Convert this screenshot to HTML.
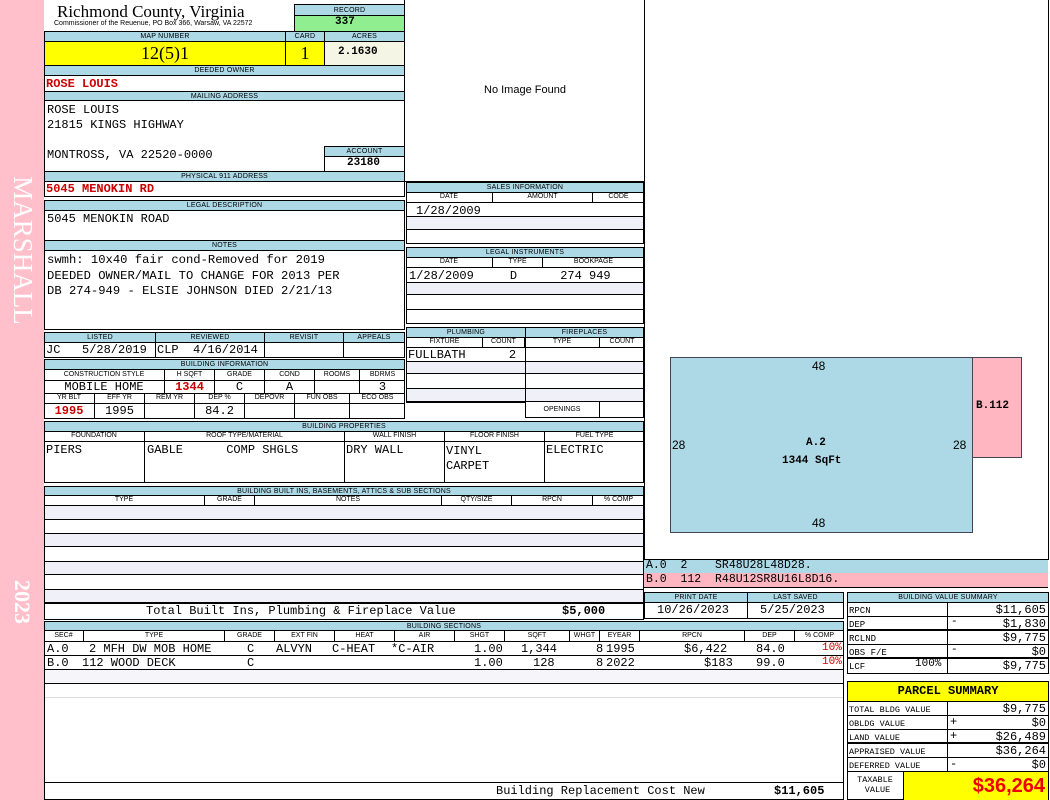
<!DOCTYPE html>
<html><head><meta charset="utf-8">
<style>
*{margin:0;padding:0;box-sizing:border-box}
body{width:1050px;height:800px;position:relative;background:#fff;overflow:hidden;font-family:"Liberation Mono",monospace}
.a{position:absolute}
.h{position:absolute;background:#add8e6;border:1px solid #000;font:7px/1 "Liberation Sans",sans-serif;text-align:center;display:flex;align-items:center;justify-content:center;color:#000;letter-spacing:.2px}
.c{position:absolute;border:1px solid #000;background:#fff}
.m{position:absolute;font:12px/1 "Liberation Mono",monospace;color:#000;white-space:pre}
.r{color:#c00;font-weight:bold}
.s{background:#f0f0f8}
</style></head><body>
<div class="a" style="left:0;top:0;width:44px;height:800px;background:#ffc0cb"></div>
<div class="a" style="left:8px;top:170px;width:28px;height:160px;display:flex;align-items:center;justify-content:center"><div style="transform:rotate(90deg);font:27px 'Liberation Serif',serif;color:#fff;white-space:nowrap">MARSHALL</div></div>
<div class="a" style="left:8px;top:576px;width:28px;height:52px;display:flex;align-items:center;justify-content:center"><div style="transform:rotate(90deg);font:bold 22px 'Liberation Serif',serif;color:#fff;white-space:nowrap">2023</div></div>

<div class="a" style="left:57px;top:2px;font:17px 'Liberation Serif',serif;white-space:nowrap">Richmond County, Virginia</div>
<div class="a" style="left:54px;top:20px;font:7px 'Liberation Sans',sans-serif;white-space:nowrap">Commissioner of the Reuenue, PO Box 366, Warsaw, VA 22572</div>
<div class="h" style="left:294px;top:4px;width:111px;height:12px">RECORD</div>
<div class="c" style="left:294px;top:15px;width:111px;height:17px;background:#90ee90"></div>
<div class="m" style="left:335px;top:17px;font-weight:bold;font-size:11px">337</div>

<div class="h" style="left:44px;top:31px;width:242px;height:11px">MAP NUMBER</div>
<div class="h" style="left:285px;top:31px;width:40px;height:11px">CARD</div>
<div class="h" style="left:324px;top:31px;width:81px;height:11px">ACRES</div>
<div class="c" style="left:44px;top:41px;width:242px;height:25px;background:#ff0"></div>
<div class="c" style="left:285px;top:41px;width:40px;height:25px;background:#ff0"></div>
<div class="c" style="left:324px;top:41px;width:81px;height:25px;background:#f5f5e6"></div>
<div class="a" style="left:44px;top:43px;width:242px;text-align:center;font:18px 'Liberation Serif',serif">12(5)1</div>
<div class="a" style="left:285px;top:43px;width:40px;text-align:center;font:18px 'Liberation Serif',serif">1</div>
<div class="m" style="left:338px;top:47px;font-weight:bold;font-size:11px">2.1630</div>

<div class="h" style="left:44px;top:65px;width:361px;height:11px">DEEDED OWNER</div>
<div class="c" style="left:44px;top:75px;width:361px;height:17px"></div>
<div class="m r" style="left:46px;top:78px">ROSE LOUIS</div>
<div class="h" style="left:44px;top:91px;width:361px;height:10px">MAILING ADDRESS</div>
<div class="c" style="left:44px;top:100px;width:361px;height:72px"></div>
<div class="m" style="left:47px;top:103px;line-height:15px">ROSE LOUIS
21815 KINGS HIGHWAY

MONTROSS, VA 22520-0000</div>
<div class="h" style="left:324px;top:146px;width:81px;height:11px">ACCOUNT</div>
<div class="c" style="left:324px;top:156px;width:81px;height:16px"></div>
<div class="m" style="left:347px;top:158px;font-weight:bold;font-size:11px">23180</div>
<div class="h" style="left:44px;top:171px;width:361px;height:11px">PHYSICAL 911 ADDRESS</div>
<div class="c" style="left:44px;top:181px;width:361px;height:16px"></div>
<div class="m r" style="left:46px;top:183px">5045 MENOKIN RD</div>

<div class="h" style="left:44px;top:200px;width:361px;height:11px">LEGAL DESCRIPTION</div>
<div class="c" style="left:44px;top:210px;width:361px;height:31px"></div>
<div class="m" style="left:47px;top:213px">5045 MENOKIN ROAD</div>
<div class="h" style="left:44px;top:240px;width:361px;height:11px">NOTES</div>
<div class="c" style="left:44px;top:250px;width:361px;height:80px"></div>
<div class="m" style="left:47px;top:253px;line-height:15.5px;font-size:12.2px">swmh: 10x40 fair cond-Removed for 2019
DEEDED OWNER/MAIL TO CHANGE FOR 2013 PER
DB 274-949 - ELSIE JOHNSON DIED 2/21/13</div>

<div class="h" style="left:44px;top:332px;width:112px;height:11px">LISTED</div>
<div class="h" style="left:155px;top:332px;width:110px;height:11px">REVIEWED</div>
<div class="h" style="left:264px;top:332px;width:80px;height:11px">REVISIT</div>
<div class="h" style="left:343px;top:332px;width:62px;height:11px">APPEALS</div>
<div class="c" style="left:44px;top:342px;width:112px;height:16px"></div>
<div class="c" style="left:155px;top:342px;width:110px;height:16px"></div>
<div class="c" style="left:264px;top:342px;width:80px;height:16px"></div>
<div class="c" style="left:343px;top:342px;width:62px;height:16px"></div>
<div class="m" style="left:46px;top:344px">JC   5/28/2019</div>
<div class="m" style="left:157px;top:344px">CLP  4/16/2014</div>

<div class="h" style="left:44px;top:359px;width:361px;height:11px">BUILDING INFORMATION</div>
<div class="c" style="left:44px;top:369px;width:361px;height:50px"></div>
<div class="a" style="left:44px;top:369px;width:361px;height:12px;font:7px 'Liberation Sans',sans-serif;display:flex">
<div style="width:121px;text-align:center;border-right:1px solid #000;line-height:11px">CONSTRUCTION STYLE</div>
<div style="width:50px;text-align:center;border-right:1px solid #000;line-height:11px">H SQFT</div>
<div style="width:50px;text-align:center;border-right:1px solid #000;line-height:11px">GRADE</div>
<div style="width:50px;text-align:center;border-right:1px solid #000;line-height:11px">COND</div>
<div style="width:45px;text-align:center;border-right:1px solid #000;line-height:11px">ROOMS</div>
<div style="flex:1;text-align:center;line-height:11px">BDRMS</div></div>
<div class="a" style="left:44px;top:380px;width:361px;height:14px;border-top:1px solid #000;border-bottom:1px solid #000;display:flex;font:12px/13px 'Liberation Mono',monospace">
<div style="width:121px;text-align:center;border-right:1px solid #000">MOBILE HOME</div>
<div style="width:50px;text-align:center;border-right:1px solid #000;color:#c00;font-weight:bold">1344</div>
<div style="width:50px;text-align:center;border-right:1px solid #000">C</div>
<div style="width:50px;text-align:center;border-right:1px solid #000">A</div>
<div style="width:45px;border-right:1px solid #000"></div>
<div style="flex:1;text-align:center">3</div></div>
<div class="a" style="left:44px;top:393px;width:361px;height:11px;font:7px 'Liberation Sans',sans-serif;display:flex;border-bottom:1px solid #000">
<div style="width:51px;text-align:center;border-right:1px solid #000;line-height:10px">YR BLT</div>
<div style="width:50px;text-align:center;border-right:1px solid #000;line-height:10px">EFF YR</div>
<div style="width:50px;text-align:center;border-right:1px solid #000;line-height:10px">REM YR</div>
<div style="width:50px;text-align:center;border-right:1px solid #000;line-height:10px">DEP %</div>
<div style="width:50px;text-align:center;border-right:1px solid #000;line-height:10px">DEPOVR</div>
<div style="width:55px;text-align:center;border-right:1px solid #000;line-height:10px">FUN OBS</div>
<div style="flex:1;text-align:center;line-height:10px">ECO OBS</div></div>
<div class="a" style="left:44px;top:404px;width:361px;height:14px;display:flex;font:12px/14px 'Liberation Mono',monospace">
<div style="width:51px;text-align:center;border-right:1px solid #000;color:#c00;font-weight:bold">1995</div>
<div style="width:50px;text-align:center;border-right:1px solid #000">1995</div>
<div style="width:50px;border-right:1px solid #000"></div>
<div style="width:50px;text-align:center;border-right:1px solid #000">84.2</div>
<div style="width:50px;border-right:1px solid #000"></div>
<div style="width:55px;border-right:1px solid #000"></div>
<div style="flex:1"></div></div>

<div class="c" style="left:404px;top:-1px;width:241px;height:183px"></div>
<div class="a" style="left:484px;top:84px;font:11px 'Liberation Sans',sans-serif">No Image Found</div>
<div class="c" style="left:644px;top:-1px;width:405px;height:561px"></div>

<div class="h" style="left:406px;top:182px;width:238px;height:11px">SALES INFORMATION</div>
<div class="c" style="left:406px;top:192px;width:238px;height:52px"></div>
<div class="a" style="left:406px;top:192px;width:238px;height:11px;border-bottom:1px solid #000;display:flex;font:7px/10px 'Liberation Sans',sans-serif">
<div style="width:87px;text-align:center;border-right:1px solid #000">DATE</div>
<div style="width:100px;text-align:center;border-right:1px solid #000">AMOUNT</div>
<div style="flex:1;text-align:center">CODE</div></div>
<div class="a s" style="left:407px;top:216px;width:236px;height:14px;border-top:1px solid #000;border-bottom:1px solid #000"></div>
<div class="m" style="left:416px;top:205px">1/28/2009</div>

<div class="h" style="left:406px;top:247px;width:238px;height:11px">LEGAL INSTRUMENTS</div>
<div class="c" style="left:406px;top:257px;width:238px;height:67px"></div>
<div class="a" style="left:406px;top:257px;width:238px;height:11px;border-bottom:1px solid #000;display:flex;font:7px/10px 'Liberation Sans',sans-serif">
<div style="width:87px;text-align:center;border-right:1px solid #000">DATE</div>
<div style="width:50px;text-align:center;border-right:1px solid #000">TYPE</div>
<div style="flex:1;text-align:center">BOOKPAGE</div></div>
<div class="m" style="left:409px;top:270px">1/28/2009     D      274 949</div>
<div class="a s" style="left:407px;top:282px;width:236px;height:13px;border-top:1px solid #000;border-bottom:1px solid #000"></div>
<div class="a" style="left:407px;top:309px;width:236px;height:1px;background:#000"></div>

<div class="h" style="left:406px;top:327px;width:120px;height:11px">PLUMBING</div>
<div class="h" style="left:525px;top:327px;width:119px;height:11px">FIREPLACES</div>
<div class="c" style="left:406px;top:337px;width:120px;height:66px"></div>
<div class="c" style="left:525px;top:337px;width:119px;height:81px"></div>
<div class="a" style="left:406px;top:337px;width:238px;height:11px;border-bottom:1px solid #000;display:flex;font:7px/10px 'Liberation Sans',sans-serif">
<div style="width:76px;text-align:center;border-right:1px solid #000;margin-left:1px">FIXTURE</div>
<div style="width:42px;text-align:center;border-right:1px solid #000">COUNT</div>
<div style="width:75px;text-align:center;border-right:1px solid #000">TYPE</div>
<div style="flex:1;text-align:center">COUNT</div></div>
<div class="m" style="left:408px;top:349px">FULLBATH      2</div>
<div class="a s" style="left:407px;top:361px;width:236px;height:13px;border-top:1px solid #000;border-bottom:1px solid #000"></div>
<div class="a s" style="left:407px;top:388px;width:236px;height:14px;border-top:1px solid #000;border-bottom:1px solid #000"></div>
<div class="a" style="left:525px;top:347px;width:1px;height:56px;background:#000"></div>
<div class="a" style="left:525px;top:402px;width:119px;height:16px;display:flex;font:7px/15px 'Liberation Sans',sans-serif">
<div style="width:75px;text-align:center;border-right:1px solid #000">OPENINGS</div></div>

<div class="h" style="left:44px;top:421px;width:600px;height:11px">BUILDING PROPERTIES</div>
<div class="c" style="left:44px;top:431px;width:600px;height:52px"></div>
<div class="a" style="left:44px;top:431px;width:600px;height:52px;display:flex;font:7px 'Liberation Sans',sans-serif">
<div style="width:101px;border-right:1px solid #000"><div style="border-bottom:1px solid #000;text-align:center;line-height:10px">FOUNDATION</div><div class="m" style="position:static;padding:2px 2px">PIERS</div></div>
<div style="width:200px;border-right:1px solid #000"><div style="border-bottom:1px solid #000;text-align:center;line-height:10px">ROOF TYPE/MATERIAL</div><div class="m" style="position:static;padding:2px 2px">GABLE      COMP SHGLS</div></div>
<div style="width:100px;border-right:1px solid #000"><div style="border-bottom:1px solid #000;text-align:center;line-height:10px">WALL FINISH</div><div class="m" style="position:static;padding:2px 1px">DRY WALL</div></div>
<div style="width:100px;border-right:1px solid #000"><div style="border-bottom:1px solid #000;text-align:center;line-height:10px">FLOOR FINISH</div><div class="m" style="position:static;padding:2px 1px;line-height:15px">VINYL
CARPET</div></div>
<div style="flex:1"><div style="border-bottom:1px solid #000;text-align:center;line-height:10px">FUEL TYPE</div><div class="m" style="position:static;padding:2px 1px">ELECTRIC</div></div>
</div>

<div class="h" style="left:44px;top:486px;width:600px;height:10px">BUILDING BUILT INS, BASEMENTS, ATTICS &amp; SUB SECTIONS</div>
<div class="c" style="left:44px;top:495px;width:600px;height:125px"></div>
<div class="a" style="left:44px;top:495px;width:600px;height:11px;border-bottom:1px solid #000;display:flex;font:7px/10px 'Liberation Sans',sans-serif">
<div style="width:161px;text-align:center;border-right:1px solid #000">TYPE</div>
<div style="width:50px;text-align:center;border-right:1px solid #000">GRADE</div>
<div style="width:187px;text-align:center;border-right:1px solid #000">NOTES</div>
<div style="width:70px;text-align:center;border-right:1px solid #000">QTY/SIZE</div>
<div style="width:81px;text-align:center;border-right:1px solid #000">RPCN</div>
<div style="flex:1;text-align:center">% COMP</div></div>
<div class="a s" style="left:45px;top:506px;width:598px;height:13px"></div>
<div class="a s" style="left:45px;top:533px;width:598px;height:14px;border-top:1px solid #000;border-bottom:1px solid #000"></div>
<div class="a" style="left:45px;top:519px;width:598px;height:1px;background:#000"></div>
<div class="a s" style="left:45px;top:561px;width:598px;height:14px;border-top:1px solid #000;border-bottom:1px solid #000"></div>
<div class="a s" style="left:45px;top:589px;width:598px;height:14px;border-top:1px solid #000;border-bottom:1px solid #000"></div>
<div class="a" style="left:45px;top:603px;width:598px;height:1px;background:#000"></div>
<div class="m" style="left:146px;top:605px">Total Built Ins, Plumbing &amp; Fireplace Value</div>
<div class="m" style="left:562px;top:605px;font-weight:bold">$5,000</div>

<div class="a" style="left:670px;top:357px;width:303px;height:176px;background:#add8e6;border:1px solid #445"></div>
<div class="a" style="left:972px;top:357px;width:50px;height:101px;background:#ffb6c1;border:1px solid #445"></div>
<div class="a" style="left:812px;top:359px;font:12px 'Liberation Sans',sans-serif">48</div>
<div class="a" style="left:812px;top:516px;font:12px 'Liberation Sans',sans-serif">48</div>
<div class="a" style="left:672px;top:438px;font:12px 'Liberation Sans',sans-serif">28</div>
<div class="a" style="left:953px;top:438px;font:12px 'Liberation Sans',sans-serif">28</div>
<div class="a" style="left:806px;top:437px;font:bold 11px 'Liberation Mono',monospace">A.2</div>
<div class="a" style="left:782px;top:455px;font:bold 11px 'Liberation Mono',monospace;white-space:pre">1344 SqFt</div>
<div class="a" style="left:976px;top:400px;font:bold 11px 'Liberation Mono',monospace">B.112</div>

<div class="a" style="left:644px;top:559px;width:404px;height:14px;background:#add8e6;border-top:1px solid #000"></div>
<div class="a" style="left:644px;top:573px;width:404px;height:15px;background:#ffb6c1;border-bottom:1px solid #000"></div>
<div class="m" style="left:646px;top:560px;font-size:11.5px">A.0  2    SR48U28L48D28.</div>
<div class="m" style="left:646px;top:574px;font-size:11.5px">B.0  112  R48U12SR8U16L8D16.</div>

<div class="h" style="left:644px;top:592px;width:104px;height:11px">PRINT DATE</div>
<div class="h" style="left:747px;top:592px;width:97px;height:11px">LAST SAVED</div>
<div class="c" style="left:644px;top:602px;width:104px;height:17px"></div>
<div class="c" style="left:747px;top:602px;width:97px;height:17px"></div>
<div class="m" style="left:657px;top:604px">10/26/2023</div>
<div class="m" style="left:760px;top:604px">5/25/2023</div>

<div class="h" style="left:44px;top:621px;width:800px;height:10px">BUILDING SECTIONS</div>
<div class="c" style="left:44px;top:630px;width:800px;height:170px"></div>
<div class="a" style="left:44px;top:630px;width:800px;height:12px;border-bottom:1px solid #000;display:flex;font:7px/11px 'Liberation Sans',sans-serif">
<div style="width:40px;text-align:center;border-right:1px solid #000">SEC#</div>
<div style="width:141px;text-align:center;border-right:1px solid #000">TYPE</div>
<div style="width:50px;text-align:center;border-right:1px solid #000">GRADE</div>
<div style="width:60px;text-align:center;border-right:1px solid #000">EXT FIN</div>
<div style="width:60px;text-align:center;border-right:1px solid #000">HEAT</div>
<div style="width:60px;text-align:center;border-right:1px solid #000">AIR</div>
<div style="width:50px;text-align:center;border-right:1px solid #000">SHGT</div>
<div style="width:65px;text-align:center;border-right:1px solid #000">SQFT</div>
<div style="width:30px;text-align:center;border-right:1px solid #000">WHGT</div>
<div style="width:40px;text-align:center;border-right:1px solid #000">EYEAR</div>
<div style="width:105px;text-align:center;border-right:1px solid #000">RPCN</div>
<div style="width:50px;text-align:center;border-right:1px solid #000">DEP</div>
<div style="flex:1;text-align:center">% COMP</div></div>
<div class="m" style="left:47px;top:643px">A.0</div>
<div class="m" style="left:89px;top:643px">2 MFH DW MOB HOME</div>
<div class="m" style="left:247px;top:643px">C</div>
<div class="m" style="left:276px;top:643px">ALVYN</div>
<div class="m" style="left:332px;top:643px">C-HEAT</div>
<div class="m" style="left:391px;top:643px">*C-AIR</div>
<div class="m" style="left:474px;top:643px">1.00</div>
<div class="m" style="left:521px;top:643px">1,344</div>
<div class="m" style="left:596px;top:643px">8</div>
<div class="m" style="left:606px;top:643px">1995</div>
<div class="m" style="left:684px;top:643px">$6,422</div>
<div class="m" style="left:756px;top:643px">84.0</div>
<div class="m" style="left:47px;top:657px">B.0</div>
<div class="m" style="left:82px;top:657px">112 WOOD DECK</div>
<div class="m" style="left:247px;top:657px">C</div>
<div class="m" style="left:474px;top:657px">1.00</div>
<div class="m" style="left:533px;top:657px">128</div>
<div class="m" style="left:596px;top:657px">8</div>
<div class="m" style="left:606px;top:657px">2022</div>
<div class="m" style="left:704px;top:657px">$183</div>
<div class="m" style="left:756px;top:657px">99.0</div>
<div class="m" style="left:822px;top:643px;color:#c00;font-size:11px">10%</div>
<div class="m" style="left:822px;top:657px;color:#c00;font-size:11px">10%</div>
<div class="a" style="left:45px;top:655px;width:798px;height:1px;background:#000"></div>
<div class="a" style="left:45px;top:669px;width:798px;height:1px;background:#000"></div>
<div class="a" style="left:45px;top:670px;width:798px;height:13px;background:#f6f6fa"></div>
<div class="a" style="left:45px;top:683px;width:798px;height:1px;background:#000"></div>
<div class="a" style="left:45px;top:697px;width:798px;height:1px;background:#ddd"></div>
<div class="a" style="left:45px;top:782px;width:798px;height:1px;background:#000"></div>
<div class="m" style="left:496px;top:785px">Building Replacement Cost New</div>
<div class="m" style="left:774px;top:785px;font-weight:bold">$11,605</div>

<div class="h" style="left:847px;top:592px;width:202px;height:11px">BUILDING VALUE SUMMARY</div>
<div class="c" style="left:847px;top:602px;width:202px;height:72px"></div>
<div class="a" style="left:947px;top:602px;width:1px;height:72px;background:#000"></div>
<div class="a" style="left:848px;top:616px;width:200px;height:1px;background:#000"></div>
<div class="a" style="left:848px;top:629px;width:200px;height:2px;background:#000"></div>
<div class="a" style="left:848px;top:644px;width:200px;height:1px;background:#000"></div>
<div class="a" style="left:848px;top:657px;width:200px;height:2px;background:#000"></div>
<div class="m" style="left:849px;top:604px;font-size:9px;line-height:14px">RPCN
DEP
RCLND
OBS F/E
LCF</div>
<div class="m" style="left:915px;top:659px;font-size:11px">100%</div>
<div class="m" style="left:951px;top:617px;font-size:11px">-</div>
<div class="m" style="left:951px;top:645px;font-size:11px">-</div>
<div class="a" style="left:948px;top:603px;width:98px;text-align:right;font:12px/14px 'Liberation Mono',monospace">$11,605<br>$1,830<br>$9,775<br>$0<br>$9,775</div>

<div class="c" style="left:847px;top:681px;width:202px;height:21px;background:#ff0"></div>
<div class="a" style="left:847px;top:684px;width:202px;text-align:center;font:bold 12px 'Liberation Mono',monospace">PARCEL SUMMARY</div>
<div class="c" style="left:847px;top:701px;width:202px;height:99px"></div>
<div class="a" style="left:947px;top:701px;width:1px;height:70px;background:#000"></div>
<div class="a" style="left:848px;top:715px;width:200px;height:1px;background:#000"></div>
<div class="a" style="left:848px;top:729px;width:200px;height:1px;background:#000"></div>
<div class="a" style="left:848px;top:742px;width:200px;height:2px;background:#000"></div>
<div class="a" style="left:848px;top:757px;width:200px;height:1px;background:#000"></div>
<div class="a" style="left:848px;top:771px;width:200px;height:1px;background:#000"></div>
<div class="m" style="left:849px;top:703px;font-size:8.5px;line-height:14px">TOTAL BLDG VALUE
OBLDG VALUE
LAND VALUE
APPRAISED VALUE
DEFERRED VALUE</div>
<div class="m" style="left:950px;top:715px;font-size:12px;line-height:14px">+
+

-</div>
<div class="a" style="left:948px;top:702px;width:98px;text-align:right;font:12px/14px 'Liberation Mono',monospace">$9,775<br>$0<br>$26,489<br>$36,264<br>$0</div>
<div class="a" style="left:903px;top:772px;width:145px;height:28px;background:#ff0;border-left:1px solid #000"></div>
<div class="m" style="left:852px;top:775px;font-size:8.5px;line-height:10px;text-align:center"> TAXABLE
  VALUE</div>
<div class="a" style="left:903px;top:772px;width:142px;text-align:right;font:bold 20px/28px 'Liberation Sans',sans-serif;color:#e00">$36,264</div>
</body></html>
